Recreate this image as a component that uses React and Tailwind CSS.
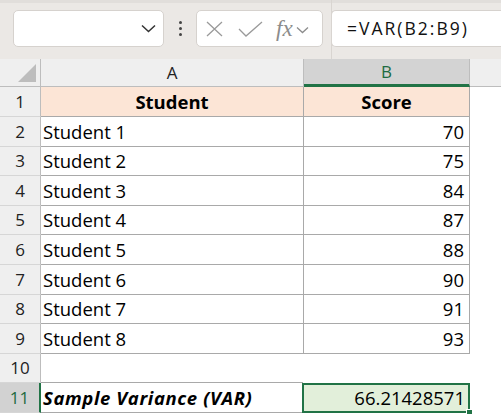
import React from 'react';

const students = [
  ['Student 1', 70],
  ['Student 2', 75],
  ['Student 3', 84],
  ['Student 4', 87],
  ['Student 5', 88],
  ['Student 6', 90],
  ['Student 7', 91],
  ['Student 8', 93],
];

// row heights so lines land at 116,146,175,... like the screenshot
const heights = ['h-[30px]', 'h-[30px]', 'h-[29px]', 'h-[30px]', 'h-[29px]', 'h-[30px]', 'h-[30px]', 'h-[29px]', 'h-[30px]', 'h-[29px]', 'h-[30px]'];

function RowHead({ n, active }) {
  return (
    <div
      className={`w-[41px] shrink-0 flex items-center justify-center border-r border-b border-b-[#d6d6d6] text-[17px] ${
        active ? 'bg-[#d2d2d2] text-[#1e6b41] border-r-2 border-r-[#217346]' : 'bg-[#efefef] text-[#222] border-r-[#bdbdbd]'
      }`}
    >
      {n}
    </div>
  );
}

function FormulaBar() {
  return (
    <div className="h-[59px] bg-[#ebe8e5] border-t-[3px] border-[#e1dedb] flex items-start pt-[7px] relative">
      {/* name box */}
      <div className="ml-[13px] w-[151px] h-[37px] bg-white rounded-[5px] border border-[#d6d2ce] flex items-center justify-end pr-[7px]">
        <svg width="15" height="9" viewBox="0 0 15 9" fill="none" stroke="#333" strokeWidth="1.5">
          <path d="M1 1.5 L7.5 7.5 L14 1.5" />
        </svg>
      </div>
      {/* dots */}
      <div className="w-[32px] h-[37px] flex flex-col items-center justify-center gap-[3px]">
        <span className="w-[3px] h-[3px] bg-[#444] rounded-full" />
        <span className="w-[3px] h-[3px] bg-[#444] rounded-full" />
        <span className="w-[3px] h-[3px] bg-[#444] rounded-full" />
      </div>
      {/* cancel / enter / fx */}
      <div className="w-[127px] h-[37px] bg-white rounded-[5px] border border-[#d6d2ce] flex items-center pl-[8px]">
        <svg width="19" height="16" viewBox="0 0 19 16" fill="none" stroke="#9a9a9a" strokeWidth="1.3">
          <path d="M2 1 L17 15 M17 1 L2 15" />
        </svg>
        <svg className="ml-[14px]" width="25" height="16" viewBox="0 0 25 16" fill="none" stroke="#9a9a9a" strokeWidth="1.3">
          <path d="M1 8 L8 15 L24 1" />
        </svg>
        <span className="ml-[13px] text-[23px] italic text-[#8c8c8c] leading-none" style={{ fontFamily: '"Liberation Serif", serif' }}>
          fx
        </span>
        <svg className="ml-[3px] mt-[2px]" width="13" height="8" viewBox="0 0 13 8" fill="none" stroke="#8c8c8c" strokeWidth="1.3">
          <path d="M1 1.5 L6.5 6.5 L12 1.5" />
        </svg>
      </div>
      {/* divider */}
      <div className="absolute left-[331px] top-[-3px] w-px h-[59px] bg-[#d9d5d1]" />
      <div className="ml-[8px] flex-1 h-[37px] bg-white rounded-l-[5px] border border-r-0 border-[#d6d2ce] flex items-center pl-[15px]">
        <span className="text-[17.5px] tracking-[2px] text-[#111]" style={{ fontFamily: '"Open Sans", sans-serif' }}>
          =VAR(B2:B9)
        </span>
      </div>
    </div>
  );
}

export default function App() {
  return (
    <div className="w-[501px] h-[414px] overflow-hidden bg-white" style={{ fontFamily: '"Open Sans", sans-serif' }}>
      <FormulaBar />

      {/* column headers */}
      <div className="flex h-[28px]">
        <div className="w-[41px] shrink-0 bg-[#efefef] border-r border-b border-[#bdbdbd] relative">
          <div className="absolute right-[4px] bottom-[4px] w-0 h-0 border-l-[18px] border-l-transparent border-b-[18px] border-b-[#bdbdbd]" />
        </div>
        <div className="w-[263px] shrink-0 bg-[#efefef] border-r border-b border-[#bdbdbd] flex items-center justify-center text-[17px] text-[#222]">
          A
        </div>
        <div className="w-[166px] shrink-0 bg-[#d3d3d3] border-r border-r-[#bdbdbd] border-b-[3px] border-b-[#217346] flex items-center justify-center text-[17px] text-[#1e6b41]">
          B
        </div>
        <div className="flex-1 bg-[#efefef] border-b border-[#bdbdbd]" />
      </div>

      {/* row 1 header */}
      <div className={`flex ${heights[0]}`}>
        <RowHead n={1} />
        <div className="w-[263px] shrink-0 bg-[#fce5d6] border-r border-b border-[#a9a9a9] flex items-center justify-center font-bold text-[18.5px] text-black">
          Student
        </div>
        <div className="w-[166px] shrink-0 bg-[#fce5d6] border-r border-b border-[#a9a9a9] flex items-center justify-center font-bold text-[18.5px] text-black">
          Score
        </div>
        <div className="flex-1" />
      </div>

      {students.map(([name, score], i) => (
        <div key={name} className={`flex ${heights[i + 1]}`}>
          <RowHead n={i + 2} />
          <div className="w-[263px] shrink-0 border-r border-b border-[#a9a9a9] flex items-center pl-[2px] text-[18.5px] text-black">
            {name}
          </div>
          <div className="w-[166px] shrink-0 border-r border-b border-[#a9a9a9] flex items-center justify-end pr-[5px] text-[18.5px] text-black">
            {score}
          </div>
          <div className="flex-1" />
        </div>
      ))}

      {/* row 10 empty */}
      <div className={`flex ${heights[9]}`}>
        <RowHead n={10} />
        <div className="w-[262px] shrink-0 border-b border-[#a9a9a9]" />
        <div className="flex-1" />
      </div>

      {/* row 11 */}
      <div className={`flex ${heights[10]}`}>
        <RowHead n={11} active />
        <div className="w-[262px] shrink-0 border-b border-[#a9a9a9] flex items-center pl-[2px] font-bold italic text-[18.5px] tracking-[0.6px] text-black">
          Sample Variance (VAR)
        </div>
        <div className="w-[168px] shrink-0 -ml-px bg-[#e2efda] border-2 border-[#217346] relative flex items-center justify-end pr-[3px] text-[18.5px] text-black">
          66.21428571
          <div className="absolute right-[-5px] bottom-[-5px] w-[7px] h-[7px] bg-[#217346] border border-white" />
        </div>
        <div className="flex-1" />
      </div>
    </div>
  );
}
